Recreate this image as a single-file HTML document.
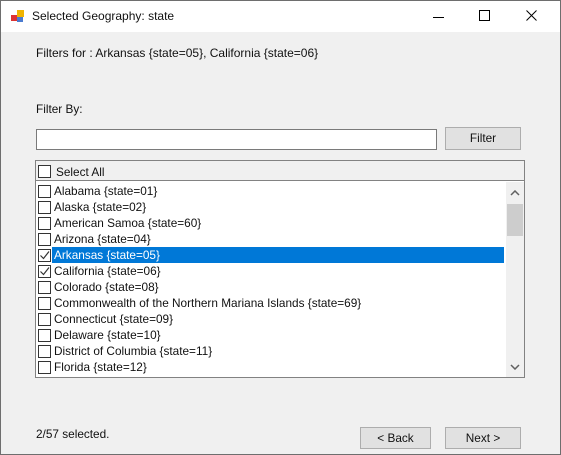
<!DOCTYPE html>
<html><head><style>
*{box-sizing:border-box;margin:0;padding:0}
body{width:561px;height:455px;background:#f0f0f0;font-family:"Liberation Sans",sans-serif;font-size:11.8px;color:#111;position:relative;overflow:hidden}
.frame{position:absolute;left:0;top:0;width:561px;height:455px;border:1px solid #6e6e6e}
.title{position:absolute;left:1px;top:1px;right:1px;height:31px;background:#fff}
.abs{position:absolute}
.cb{position:absolute;left:2px;width:13px;height:13px;border:1px solid #333;background:#fff}
.row{position:absolute;left:0;height:16px;width:468px;line-height:16px}
.row span{position:absolute;left:18px;white-space:nowrap}
.btn{position:absolute;background:#e1e1e1;border:1px solid #adadad;text-align:center;line-height:20px}
</style></head><body>
<div class="frame"></div>
<div class="title">
 <svg class="abs" style="left:10px;top:9px" width="13" height="13"><rect x="0" y="5" width="6" height="6" fill="#d33"/><rect x="6" y="0" width="7" height="7" fill="#f0b400"/><rect x="6" y="7" width="6" height="5" fill="#4a7bd0"/></svg>
 <div class="abs" style="left:31px;top:8px;font-size:12px">Selected Geography: state</div>
 <svg class="abs" style="left:432px;top:10px" width="12" height="12"><line x1="0" y1="6.5" x2="11" y2="6.5" stroke="#000"/></svg>
 <svg class="abs" style="left:478px;top:9px" width="12" height="12"><rect x="0.5" y="0.5" width="10" height="10" fill="none" stroke="#000"/></svg>
 <svg class="abs" style="left:525px;top:9px" width="12" height="12"><path d="M0.5 0.5L10.5 10.5M10.5 0.5L0.5 10.5" stroke="#000"/></svg>
</div>
<div class="abs" style="left:36px;top:46px;font-size:12px">Filters for : Arkansas {state=05}, California {state=06}</div>
<div class="abs" style="left:36px;top:102px">Filter By:</div>
<div class="abs" style="left:36px;top:129px;width:401px;height:21px;background:#fff;border:1px solid #7a7a7a"></div>
<div class="btn" style="left:445px;top:127px;width:76px;height:23px">Filter</div>
<div class="abs" style="left:35px;top:160px;width:490px;height:218px;border:1px solid #828282;background:#fff">
 <div class="abs" style="left:0;top:0;width:488px;height:20px;background:#f0f0f0;border-bottom:1px solid #828282">
  <div class="cb" style="top:4px"></div><span class="abs" style="left:20px;top:4px">Select All</span>
 </div>
 <div class="abs" style="left:0;top:22px;width:469px;height:194px">
  <div class="row" style="top:0"><div class="cb" style="top:2px"></div><span>Alabama {state=01}</span></div>
  <div class="row" style="top:16px"><div class="cb" style="top:2px"></div><span>Alaska {state=02}</span></div>
  <div class="row" style="top:32px"><div class="cb" style="top:2px"></div><span>American Samoa {state=60}</span></div>
  <div class="row" style="top:48px"><div class="cb" style="top:2px"></div><span>Arizona {state=04}</span></div>
  <div class="row" style="top:64px"><div class="abs" style="left:16px;top:0;width:452px;height:16px;background:#0078d7"></div><div class="cb" style="top:2px"><svg width="11" height="11" style="position:absolute;left:0;top:0"><path d="M1.5 5.5L4.5 8.5L10 1.5" fill="none" stroke="#333" stroke-width="1.2"/></svg></div><span style="color:#fff">Arkansas {state=05}</span></div>
  <div class="row" style="top:80px"><div class="cb" style="top:2px"><svg width="11" height="11" style="position:absolute;left:0;top:0"><path d="M1.5 5.5L4.5 8.5L10 1.5" fill="none" stroke="#333" stroke-width="1.2"/></svg></div><span>California {state=06}</span></div>
  <div class="row" style="top:96px"><div class="cb" style="top:2px"></div><span>Colorado {state=08}</span></div>
  <div class="row" style="top:112px"><div class="cb" style="top:2px"></div><span>Commonwealth of the Northern Mariana Islands {state=69}</span></div>
  <div class="row" style="top:128px"><div class="cb" style="top:2px"></div><span>Connecticut {state=09}</span></div>
  <div class="row" style="top:144px"><div class="cb" style="top:2px"></div><span>Delaware {state=10}</span></div>
  <div class="row" style="top:160px"><div class="cb" style="top:2px"></div><span>District of Columbia {state=11}</span></div>
  <div class="row" style="top:176px"><div class="cb" style="top:2px"></div><span>Florida {state=12}</span></div>
 </div>
 <div class="abs" style="left:470px;top:21px;width:18px;height:195px;background:#f0f0f0">
  <svg class="abs" style="left:4px;top:8px" width="10" height="6"><path d="M1 5L5 1L9 5" fill="none" stroke="#606060" stroke-width="1.5"/></svg>
  <div class="abs" style="left:1px;top:22px;width:16px;height:32px;background:#cdcdcd"></div>
  <svg class="abs" style="left:4px;top:182px" width="10" height="6"><path d="M1 1L5 5L9 1" fill="none" stroke="#606060" stroke-width="1.5"/></svg>
 </div>
</div>
<div class="abs" style="left:36px;top:427px">2/57 selected.</div>
<div class="btn" style="left:360px;top:427px;width:71px;height:22px">&lt; Back</div>
<div class="btn" style="left:445px;top:427px;width:76px;height:22px">Next &gt;</div>
</body></html>
